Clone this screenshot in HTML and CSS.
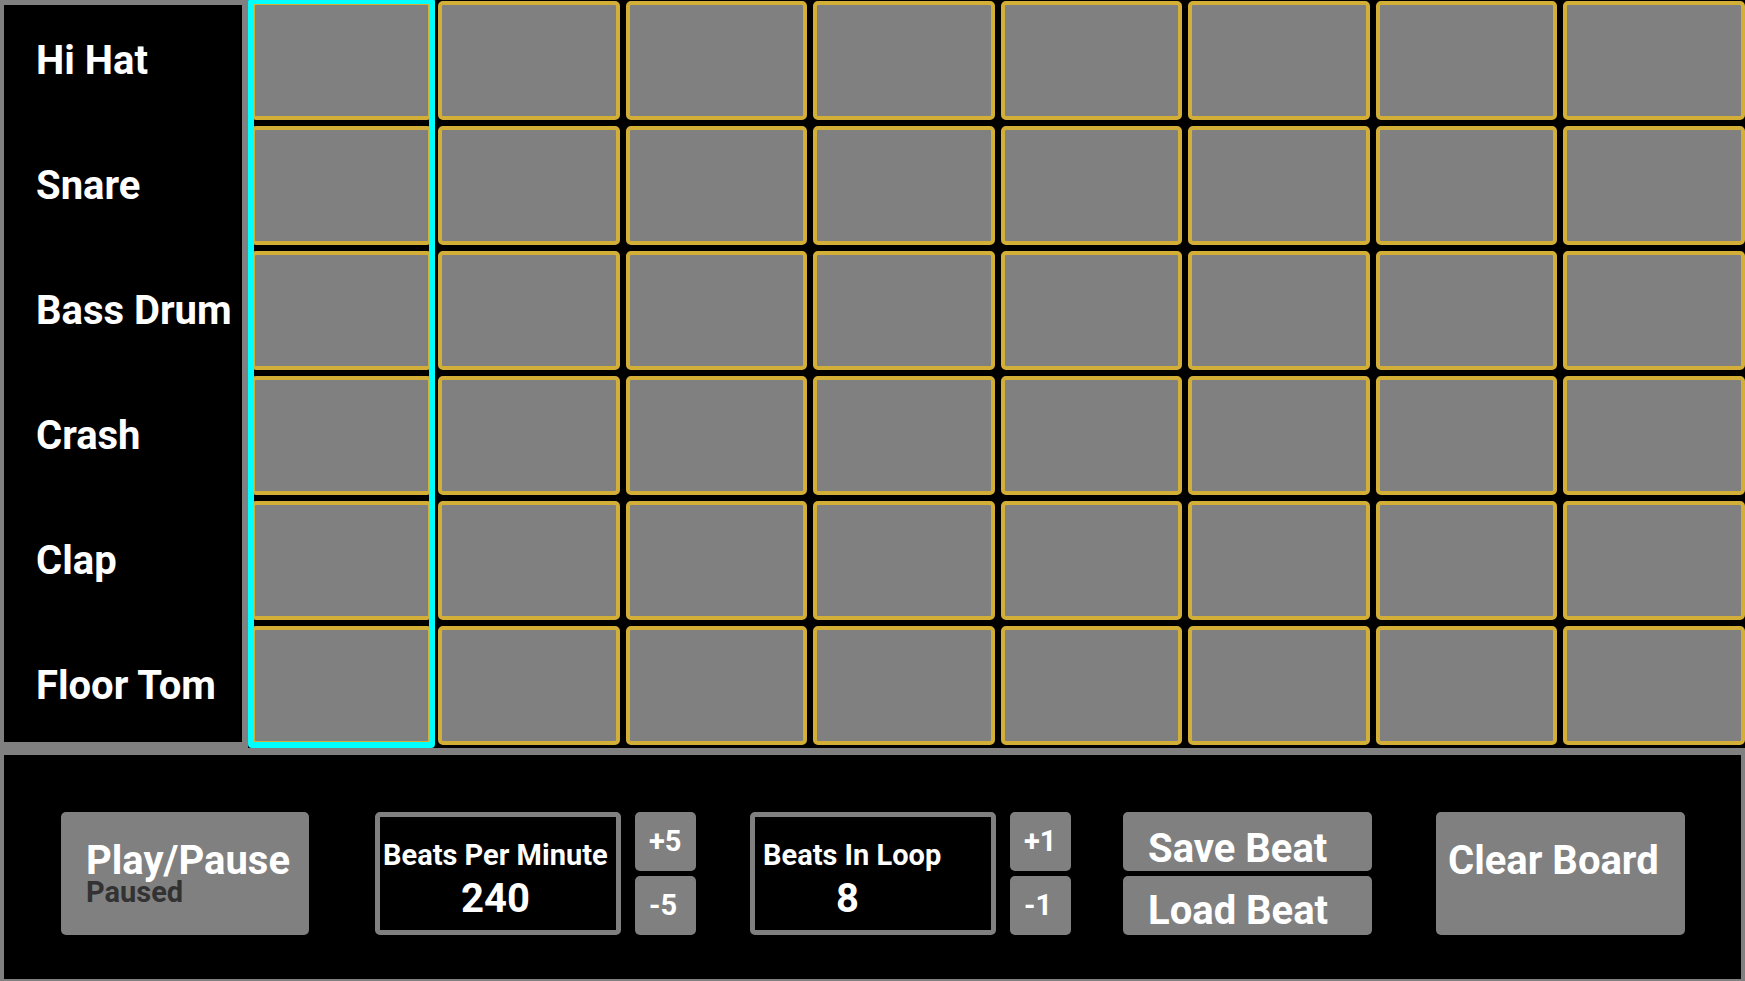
FILE: index.html
```html
<!DOCTYPE html>
<html>
<head>
<meta charset="utf-8">
<link rel="stylesheet" href="styles.css">
<title>Beat Maker</title>
</head>
<body>
<div class="top">
  <div class="labels">
    <div class="label-list">
      <div class="label">Hi Hat</div>
      <div class="label">Snare</div>
      <div class="label">Bass Drum</div>
      <div class="label">Crash</div>
      <div class="label">Clap</div>
      <div class="label">Floor Tom</div>
    </div>
  </div>
  <div class="grid">
    <div class="col active"><div class="cell"></div><div class="cell"></div><div class="cell"></div><div class="cell"></div><div class="cell"></div><div class="cell"></div></div>
    <div class="col"><div class="cell"></div><div class="cell"></div><div class="cell"></div><div class="cell"></div><div class="cell"></div><div class="cell"></div></div>
    <div class="col"><div class="cell"></div><div class="cell"></div><div class="cell"></div><div class="cell"></div><div class="cell"></div><div class="cell"></div></div>
    <div class="col"><div class="cell"></div><div class="cell"></div><div class="cell"></div><div class="cell"></div><div class="cell"></div><div class="cell"></div></div>
    <div class="col"><div class="cell"></div><div class="cell"></div><div class="cell"></div><div class="cell"></div><div class="cell"></div><div class="cell"></div></div>
    <div class="col"><div class="cell"></div><div class="cell"></div><div class="cell"></div><div class="cell"></div><div class="cell"></div><div class="cell"></div></div>
    <div class="col"><div class="cell"></div><div class="cell"></div><div class="cell"></div><div class="cell"></div><div class="cell"></div><div class="cell"></div></div>
    <div class="col"><div class="cell"></div><div class="cell"></div><div class="cell"></div><div class="cell"></div><div class="cell"></div><div class="cell"></div></div>
  </div>
</div>
<div class="bottom">
  <div class="btn play">
    <div class="big">Play/Pause</div>
    <div class="status">Paused</div>
  </div>
  <div class="box bpm">
    <div class="box-label bpm-label">Beats Per Minute</div>
    <div class="box-value">240</div>
  </div>
  <div class="steppers">
    <div class="btn step">+5</div>
    <div class="btn step">-5</div>
  </div>
  <div class="box loop">
    <div class="box-label loop-label">Beats In Loop</div>
    <div class="box-value">8</div>
  </div>
  <div class="steppers">
    <div class="btn step">+1</div>
    <div class="btn step">-1</div>
  </div>
  <div class="saveload">
    <div class="btn half save">Save Beat</div>
    <div class="btn half load">Load Beat</div>
  </div>
  <div class="btn clear">Clear Board</div>
</div>
</body>
</html>
```
FILE: styles.css
```css
html, body {
  margin: 0;
  padding: 0;
}
body {
  background: #808080;
  width: 1745px;
  height: 981px;
  overflow: hidden;
  font-family: Roboto, "Liberation Sans", sans-serif;
  font-weight: 700;
  color: #ffffff;
}
.top {
  display: flex;
  height: 750px;
  margin-top: -2px;
  width: 1760px;
}
.labels {
  flex: 0 0 238px;
  margin: 7px 5.5px 6px 4px;
  background: #000;
  overflow: hidden;
}
.label-list {
  margin-top: -7px;
}
.label {
  height: 125px;
  display: flex;
  align-items: center;
  padding-left: 32px;
  font-size: 40px;
  line-height: 40px;
}
.grid {
  flex: 0 0 1500px;
  display: flex;
  background: #000;
  height: 750px;
}
.col {
  position: relative;
  width: 187.5px;
  display: flex;
  flex-direction: column;
}
.cell {
  height: 119px;
  margin: 3px;
  box-sizing: border-box;
  border: 4px solid #d4af37;
  border-radius: 5px;
  background: #808080;
}
.col.active::after {
  content: "";
  position: absolute;
  left: 0;
  top: 0;
  right: 0;
  bottom: 0;
  border: 6px solid #00ffff;
  border-radius: 4px;
}
.bottom {
  margin: 7px 0 0 4px;
  width: 1737px;
  height: 224px;
  background: #000;
  display: flex;
  align-items: flex-start;
  padding-top: 57px;
  box-sizing: border-box;
}
.btn {
  background: #808080;
  border-radius: 5px;
  box-sizing: border-box;
}
.big {
  font-size: 40px;
  line-height: 36px;
}
.play {
  width: 248px;
  height: 123px;
  margin-left: 57px;
  padding: 31px 0 0 25px;
}
.status {
  font-size: 29px;
  line-height: 26px;
  color: #323232;
}
.box {
  width: 246px;
  height: 123px;
  box-sizing: border-box;
  border: 5px solid #808080;
  border-radius: 5px;
  background: #000;
}
.bpm {
  margin-left: 66px;
}
.loop {
  margin-left: 54px;
}
.box-label {
  font-size: 29px;
  line-height: 29px;
  margin-top: 24px;
  white-space: nowrap;
}
.bpm-label {
  padding-left: 3px;
}
.loop-label {
  padding-left: 8px;
}
.box-value {
  font-size: 40px;
  line-height: 40px;
  margin-top: 9px;
  padding-left: 81px;
}
.steppers {
  display: flex;
  flex-direction: column;
  gap: 5px;
  margin-left: 14px;
}
.step {
  width: 61px;
  height: 59px;
  font-size: 29px;
  line-height: 29px;
  padding: 15px 0 0 14px;
}
.saveload {
  display: flex;
  flex-direction: column;
  gap: 5px;
  margin-left: 52px;
}
.half {
  width: 249px;
  height: 59px;
  font-size: 40px;
  line-height: 40px;
  padding: 14px 0 0 25px;
}
.save {
  padding-top: 17px;
}
.load {
  padding-top: 15px;
}
.clear {
  width: 249px;
  height: 123px;
  margin-left: 64px;
  font-size: 40px;
  line-height: 40px;
  padding: 29px 0 0 12px;
}
```
